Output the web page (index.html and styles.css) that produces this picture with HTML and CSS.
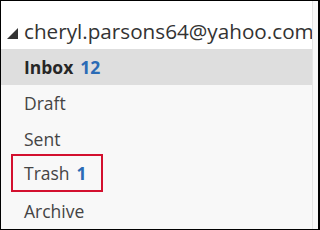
FILE: index.html
```html
<!DOCTYPE html>
<html>
<head>
<meta charset="utf-8">
<link rel="stylesheet" href="styles.css">
</head>
<body>
<div class="frame">
  <div class="pane">
    <div class="account">
      <span class="caret"></span>
      <span class="email">cheryl.parsons64@yahoo.com</span>
    </div>
    <ul class="folders">
      <li class="folder selected"><span class="name">Inbox</span><span class="count">12</span></li>
      <li class="folder"><span class="name">Draft</span></li>
      <li class="folder"><span class="name">Sent</span></li>
      <li class="folder"><span class="highlight"><span class="name">Trash</span><span class="count">1</span></span></li>
      <li class="folder"><span class="name">Archive</span></li>
    </ul>
  </div>
  <div class="gutter"></div>
</div>
</body>
</html>
```

FILE: styles.css
```css
html, body {
  margin: 0;
  padding: 0;
  background: #fff;
}
.frame {
  box-sizing: border-box;
  width: 320px;
  height: 230px;
  border: 1px solid #000;
  border-right-width: 2px;
  display: flex;
  background: #f8f8f8;
  font-family: "Open Sans", "Noto Sans", sans-serif;
  color: #444;
  overflow: hidden;
}
.pane {
  width: 311px;
  display: flex;
  flex-direction: column;
}
.gutter {
  flex: 1;
  border-left: 1px solid #e4e4e4;
  background: #f8f8f8;
}
.account {
  height: 48px;
  background: #fff;
  display: flex;
  align-items: flex-end;
  box-sizing: border-box;
  padding-bottom: 5px;
  padding-left: 6px;
}
.caret {
  width: 0;
  height: 0;
  border-style: solid;
  border-width: 0 0 11px 11px;
  border-color: transparent transparent #333 transparent;
  margin-right: 6px;
  margin-bottom: 5px;
}
.email {
  font-size: 20.7px;
  line-height: 26px;
  color: #333;
  white-space: nowrap;
}
.folders {
  list-style: none;
  margin: 0;
  padding: 0;
}
.folder {
  height: 36px;
  display: flex;
  align-items: center;
  padding-left: 23px;
  font-size: 17.5px;
  line-height: 24px;
}
.folder.selected {
  background: #dedede;
  color: #262626;
  font-weight: 700;
}
.count {
  margin-left: 7px;
  color: #2b6bb5;
  font-weight: 700;
}
.highlight {
  display: inline-flex;
  align-items: center;
  margin-left: -13px;
  margin-top: -4px;
  padding: 5px 14px 5px 11px;
  border: 2px solid #d3102e;
}
```
